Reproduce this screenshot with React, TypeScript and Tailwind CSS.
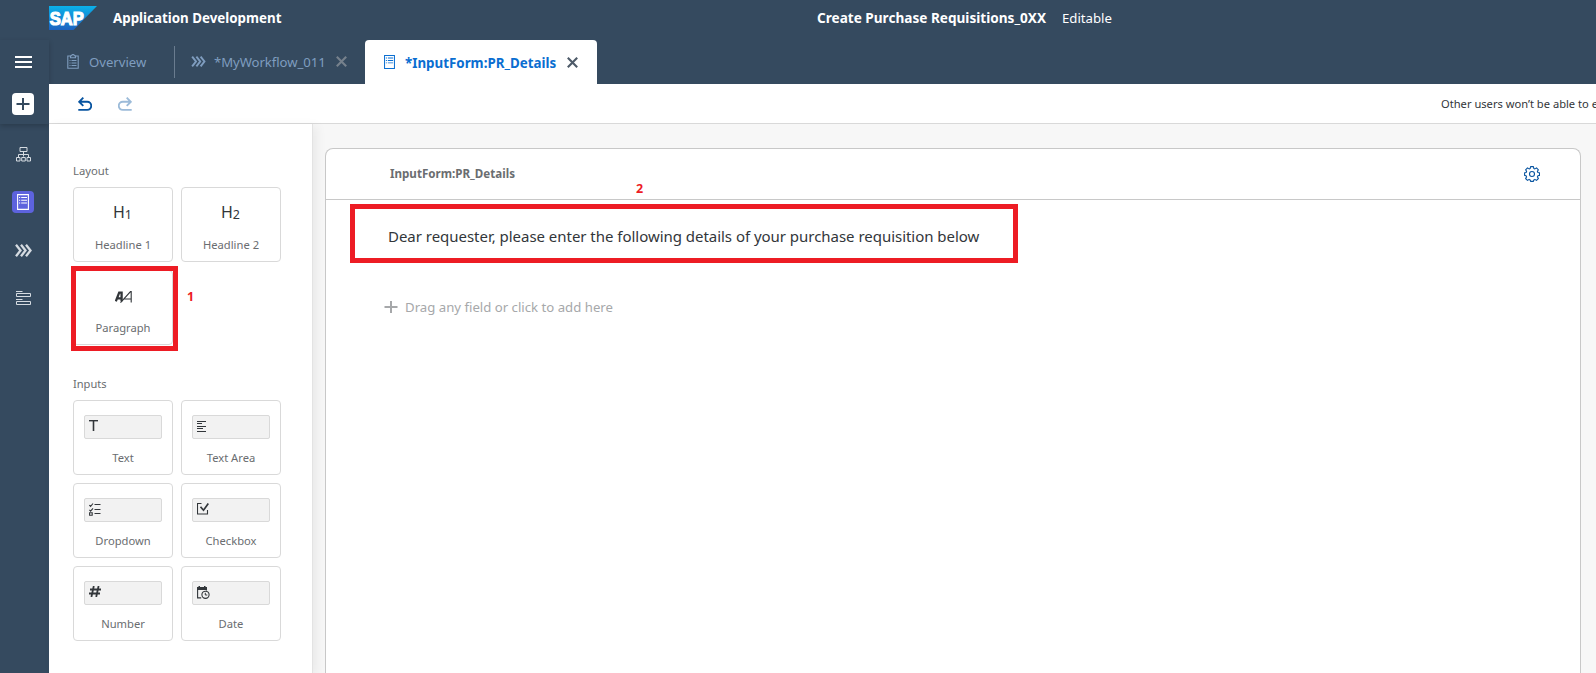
import type { ReactNode } from "react";

function SapLogo() {
  return (
    <svg width="48" height="24" viewBox="0 0 48 24">
      <defs>
        <linearGradient id="sap" x1="0" y1="0" x2="0" y2="1">
          <stop offset="0" stopColor="#0bb1ea" />
          <stop offset="1" stopColor="#1c62c0" />
        </linearGradient>
      </defs>
      <path d="M0 0h48L24.500 24H0z" fill="url(#sap)" />
      <text
        x="0.800"
        y="18.800"
        fill="#fff"
        stroke="#fff"
        strokeWidth="1.200"
        fontFamily="Liberation Sans, sans-serif"
        fontWeight="700"
        fontSize="19"
        textLength="34"
        lengthAdjust="spacingAndGlyphs"
      >
        SAP
      </text>
    </svg>
  );
}

function MenuIcon() {
  return (
    <svg width="17" height="12" viewBox="0 0 17 12" fill="#fff">
      <path d="M0 0h17v2H0zM0 5h17v2H0zM0 10h17v2H0z" />
    </svg>
  );
}

function PlusIcon({ className }: { className: string }) {
  return (
    <svg width="14" height="14" viewBox="0 0 14 14" className={className} fill="none" strokeWidth="2">
      <path d="M7 1v12M.5 7h13" />
    </svg>
  );
}

function HierarchyIcon() {
  return (
    <svg width="15" height="15" viewBox="0 0 15 15" className="mt-px" fill="none" stroke="#d5dbe1" strokeWidth="1">
      <path d="M4 .5h7v4H4zM7.500 4.500v5M2.500 10V7.500h10V10M.5 10.500h3.500v3.500H.5zM5.700 10.500h3.600v3.500H5.700zM11 10.500h3.500v3.500H11z" />
    </svg>
  );
}

function FormIcon({ className }: { className: string }) {
  return (
    <svg viewBox="0 0 12 16" preserveAspectRatio="none" className={className} fill="none" strokeWidth="1.100">
      <path d="M.6.6h10.800v14.800H.6z" />
      <path d="M2 3.500h1.200M4.200 3.500h5.800M2 6.200h1.200M4.200 6.200h5.800M2 9h1.200M4.200 9h5.800" />
    </svg>
  );
}

function ChevronsIcon({ className }: { className: string }) {
  return (
    <svg viewBox="0 0 17 13" className={className} fill="none" strokeWidth="2.300">
      <path d="M1 .8l4.500 5.700L1 12.200M6 .8l4.500 5.700L6 12.200M11 .8l4.500 5.700L11 12.200" />
    </svg>
  );
}

function BarsIcon() {
  return (
    <svg width="15" height="15" viewBox="0 0 15 15" className="mt-px" fill="none" stroke="#d5dbe1" strokeWidth="1">
      <path d="M0 .5h6.500M.5 2.500h14v3H.5zM0 8.500h6.500M.5 10.500h14v3H.5z" />
    </svg>
  );
}

function ClipboardIcon() {
  return (
    <svg width="12" height="15" viewBox="0 0 12 15" fill="none" stroke="#7f9dbf" strokeWidth="1.100">
      <path d="M3.500 2H.8v12.300h10.400V2H8.500M3.500 3.800V1.800h1.200a1.300 1.300 0 0 1 2.600 0h1.200v2z" />
      <path d="M2.500 6.500h1M4.500 6.500h5M2.500 9h1M4.500 9h5M2.500 11.500h1M4.500 11.500h5" />
    </svg>
  );
}

function CloseIcon({ className }: { className: string }) {
  return (
    <svg width="11" height="11" viewBox="0 0 11 11" className={className} fill="none" strokeWidth="2.100">
      <path d="M.8.800l9.400 9.400M10.200.8L.8 10.200" />
    </svg>
  );
}

function UndoIcon({ className }: { className: string }) {
  return (
    <svg width="14" height="14" viewBox="0 0 14 14" className={className} fill="none" strokeWidth="1.900">
      <path d="M5.300.7L1.200 4.800l4.100 4.100M1.500 4.800h7.700a4 4 0 0 1 0 8.100H.3" />
    </svg>
  );
}

function GearIcon() {
  return (
    <svg width="16" height="16" viewBox="0 0 16 16" fill="none" stroke="#0854a0" strokeWidth="1.100" strokeLinejoin="round">
      <path d="M6.600.6h2.800l.4 1.800 1.100.5 1.600-1 1.900 1.900-1 1.600.5 1.100 1.600.3v2.600l-1.600.4-.5 1.100 1 1.600-1.900 1.900-1.600-1-1.100.5-.4 1.500H6.600l-.4-1.500-1.100-.5-1.600 1-1.900-1.900 1-1.600-.5-1.100L.6 9.400V6.800l1.500-.3.5-1.100-1-1.600 1.900-1.900 1.600 1 1.100-.5z" />
      <circle cx="8" cy="8" r="2.500" />
    </svg>
  );
}

function ParagraphIcon() {
  return (
    <svg width="17" height="12" viewBox="0 0 17 12" className="mb-px" fill="none" stroke="#32363a">
      <path d="M.8 10.300L4.200 1.600h2.400v8.700M2.300 7.300h4" strokeWidth="2.300" />
      <path d="M5.500 11.600L15.500.6h.7v11M8.700 8h7.500" strokeWidth="1.100" />
    </svg>
  );
}

function TextIcon() {
  return (
    <svg width="9" height="11" viewBox="0 0 9 11" fill="none" stroke="#32363a">
      <path d="M0 .7h9" strokeWidth="1.400" />
      <path d="M4.500.5V11" strokeWidth="1.600" />
    </svg>
  );
}

function TextAreaIcon() {
  return (
    <svg width="10" height="11" viewBox="0 0 10 11" className="mt-px" fill="#32363a">
      <path d="M0 0h9v1H0zM0 2h5v1H0zM0 5h9v1H0zM0 7h6v1H0zM0 10h9v1H0z" />
    </svg>
  );
}

function ListIcon() {
  return (
    <svg width="12" height="13" viewBox="0 0 12 13" fill="none" stroke="#32363a" strokeWidth="1.100">
      <path d="M.4 2l1.200 1.300L4 .5M.4 6.800l1.200 1.300L4 5.300M.6 9.800h2.600v2.500H.6zM5.500 1.500h6M5.500 6.500h6M5.500 10.500h6" />
    </svg>
  );
}

function CheckIcon() {
  return (
    <svg width="12" height="12" viewBox="0 0 12 12" fill="none" stroke="#32363a">
      <path d="M4.500.5h-4v10.500h10V7" strokeWidth="1.100" />
      <path d="M3.500 3.800l3 3.400L11.300.6" strokeWidth="1.700" />
    </svg>
  );
}

function HashIcon() {
  return (
    <svg width="12" height="11" viewBox="0 0 12 11" fill="none" stroke="#32363a" strokeWidth="1.800">
      <path d="M4.800 0L2.400 11M9.600 0L7.200 11M1 3.500h11M0 7.500h11" />
    </svg>
  );
}

function DateIcon() {
  return (
    <svg width="13" height="13" viewBox="0 0 13 13" fill="none" stroke="#32363a">
      <path d="M0 1h1.500V0H3v1h4V0h1.500v1H10v3H0z" fill="#32363a" stroke="none" />
      <path d="M.6 3v8.900h3.600M9.500 3.500v1" strokeWidth="1.100" />
      <circle cx="8.500" cy="8.800" r="3.600" strokeWidth="1.100" />
      <path d="M8.300 6.800v2.200h2" strokeWidth="1" />
    </svg>
  );
}

function Heading({ level }: { level: string }) {
  return (
    <span className="flex pr-px pb-px text-[16px] leading-4 text-[#32363a]">
      H<span className="pt-[3px] text-[12.500px]">{level}</span>
    </span>
  );
}

function Card({ label, children }: { label: string; children: ReactNode }) {
  return (
    <div className="flex h-[75px] w-[100px] flex-col rounded border border-[#d9d9d9] bg-white pt-3.5">
      {children}
      <span className="mt-auto pb-2 text-center text-[11.200px] leading-4">{label}</span>
    </div>
  );
}

function LayoutCard({ label, children }: { label: string; children: ReactNode }) {
  return (
    <Card label={label}>
      <div className="flex h-6 items-center justify-center">{children}</div>
    </Card>
  );
}

function InputCard({ label, children }: { label: string; children: ReactNode }) {
  return (
    <Card label={label}>
      <div className="mx-2.5 flex h-6 shrink-0 items-start rounded-[2px] border border-[#d9d9d9] bg-[#f2f2f2] pt-1 pl-1">
        {children}
      </div>
    </Card>
  );
}

function Header() {
  return (
    <header className="flex h-10 shrink-0 items-center pb-1 pl-[49px] text-white">
      <SapLogo />
      <span className="ml-4 w-[704px] pt-px text-[13.350px] font-bold">Application Development</span>
      <span className="w-[230px] pt-px text-[13.600px] font-bold whitespace-nowrap">Create Purchase Requisitions_0XX</span>
      <span className="ml-[15px] pt-px text-[13.200px]">Editable</span>
    </header>
  );
}

function Sidebar() {
  return (
    <nav className="flex w-[49px] shrink-0 flex-col">
      <div className="flex h-[84px] shrink-0 flex-col items-center pr-[2px] shadow-[0_2px_5px_rgba(0,0,0,0.2)]">
        <div className="flex h-11 items-center">
          <MenuIcon />
        </div>
        <div className="mt-[9px] mr-px flex size-[22px] items-center justify-center rounded bg-white">
          <PlusIcon className="stroke-[#354a5f]" />
        </div>
      </div>
      <div className="flex flex-col items-center pt-[6px] pr-[2px]">
        <div className="flex h-12 items-center"><HierarchyIcon /></div>
        <div className="mr-px flex h-12 items-center">
          <div className="flex size-[22px] items-center justify-center rounded bg-[#5d63dd]">
            <FormIcon className="h-4 w-3 stroke-white" />
          </div>
        </div>
        <div className="flex h-12 items-center"><ChevronsIcon className="mt-px h-[13px] w-[17px] stroke-[#d5dbe1]" /></div>
        <div className="flex h-12 items-center"><BarsIcon /></div>
      </div>
    </nav>
  );
}

function Tabs() {
  return (
    <div className="flex h-11 shrink-0 items-center text-[13.150px] text-[#7f9dbf]">
      <div className="flex w-[125px] items-center pl-[18px]">
        <ClipboardIcon />
        <span className="ml-2.5 pt-0.5">Overview</span>
      </div>
      <div className="h-8 w-px bg-[#6a7c8f]" />
      <div className="flex w-[190px] items-center pl-4">
        <ChevronsIcon className="h-[11px] w-[15px] stroke-[#7f9dbf]" />
        <span className="ml-2 w-[113px] pt-0.5 tracking-[-0.060px]">*MyWorkflow_011</span>
        <CloseIcon className="ml-[9px] stroke-[#76818c]" />
      </div>
      <div className="flex h-11 w-[232px] items-center rounded-t bg-white pl-[19px] text-[#0a6ed1]">
        <FormIcon className="h-3.5 w-[11px] stroke-[#0a6ed1]" />
        <span className="ml-2.5 w-[153px] pt-0.5 text-[13.350px] font-bold">*InputForm:PR_Details</span>
        <CloseIcon className="ml-[9px] stroke-[#4d5a68]" />
      </div>
    </div>
  );
}

function Toolbar() {
  return (
    <div className="flex h-10 shrink-0 items-center border-b border-[#d9d9d9] bg-white pl-[29px]">
      <UndoIcon className="stroke-[#0854a0]" />
      <UndoIcon className="ml-[26px] -scale-x-100 stroke-[#9cbbd9]" />
      <span className="ml-auto w-[155px] pt-0.5 text-[11.150px] whitespace-nowrap text-[#32363a]">
        Other users won’t be able to e
      </span>
    </div>
  );
}

function Palette() {
  return (
    <aside className="relative flex w-[264px] shrink-0 flex-col border-r border-[#e3e3e3] bg-white pt-[39px] pl-6 text-[#6a6d70] shadow-[4px_2px_10px_rgba(0,0,0,0.060)]">
      <h2 className="text-[11.300px] leading-4">Layout</h2>
      <div className="mt-2 grid grid-cols-[100px_100px] gap-2">
        <LayoutCard label="Headline 1"><Heading level="1" /></LayoutCard>
        <LayoutCard label="Headline 2"><Heading level="2" /></LayoutCard>
        <div className="relative">
          <LayoutCard label="Paragraph"><ParagraphIcon /></LayoutCard>
          <div className="absolute -top-1 -left-0.5 h-[85px] w-[107px] border-5 border-[#ed1c24]" />
        </div>
        <span className="pt-[19px] pl-1.5 text-[12.500px] leading-4 font-bold text-[#ed1c24]">1</span>
      </div>
      <h2 className="mt-[31px] text-[11.100px] leading-4">Inputs</h2>
      <div className="mt-2 grid grid-cols-[100px_100px] gap-2">
        <InputCard label="Text"><TextIcon /></InputCard>
        <InputCard label="Text Area"><TextAreaIcon /></InputCard>
        <InputCard label="Dropdown"><ListIcon /></InputCard>
        <InputCard label="Checkbox"><CheckIcon /></InputCard>
        <InputCard label="Number"><HashIcon /></InputCard>
        <InputCard label="Date"><DateIcon /></InputCard>
      </div>
    </aside>
  );
}

function Canvas() {
  return (
    <main className="-order-1 flex min-w-0 flex-1 bg-[#f7f7f7] pt-6 pr-[15px] pl-3">
      <section className="flex flex-1 flex-col rounded-t-lg border border-b-0 border-[#c8c8c8] bg-white">
        <div className="relative flex h-[51px] items-center justify-between border-b border-[#c8c8c8] pr-10 pl-16">
          <h1 className="text-[11.600px] font-bold text-[#6a6d70]">InputForm:PR_Details</h1>
          <GearIcon />
          <span className="absolute top-8 left-[310px] text-[12.500px] leading-4 font-bold text-[#ed1c24]">2</span>
        </div>
        <div className="mt-1 ml-6 flex h-[59px] w-[668px] items-center border-5 border-[#ed1c24] pl-[33px] text-[15px] tracking-[-0.030px] whitespace-nowrap text-[#32363a]">
          <p className="pt-[5px]">Dear requester, please enter the following details of your purchase requisition below</p>
        </div>
        <div className="mt-8 ml-[58px] flex items-center text-[13.200px] leading-6 text-[#a6a8aa]">
          <PlusIcon className="mr-[7px] stroke-[#a6a8aa]" />
          Drag any field or click to add here
        </div>
      </section>
    </main>
  );
}

export default function App() {
  return (
    <div className="flex h-[673px] w-[1596px] flex-col overflow-hidden bg-[#354a5f] font-['Noto_Sans','Open_Sans',sans-serif]">
      <Header />
      <div className="flex min-h-0 flex-1">
        <Sidebar />
        <div className="flex min-w-0 flex-1 flex-col">
          <Tabs />
          <Toolbar />
          <div className="flex min-h-0 flex-1 flex-row-reverse">
            <Canvas />
            <Palette />
          </div>
        </div>
      </div>
    </div>
  );
}
